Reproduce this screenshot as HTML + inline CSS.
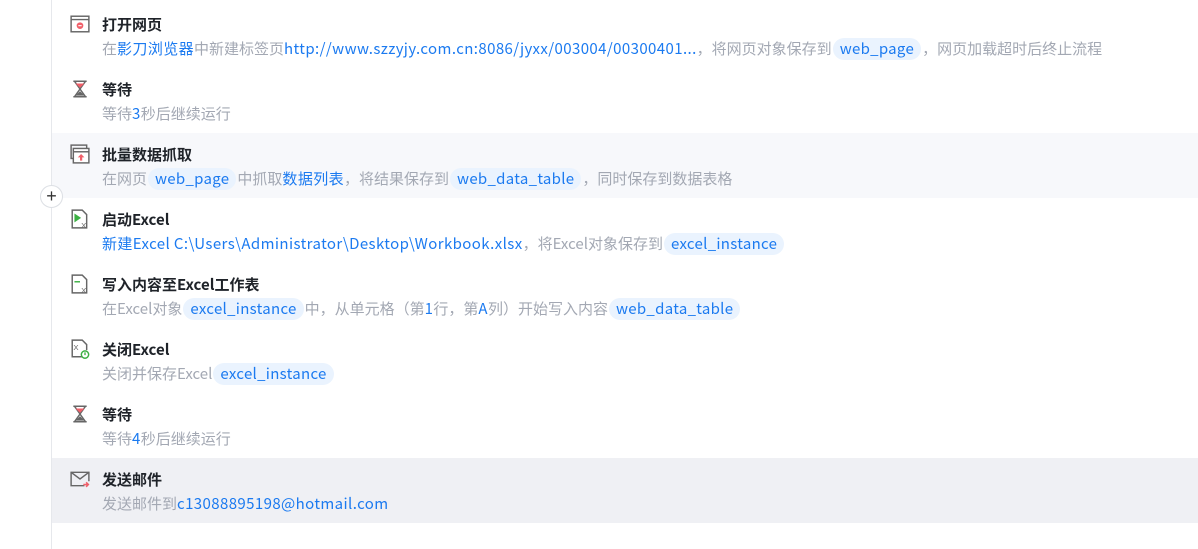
<!DOCTYPE html>
<html><head><meta charset="utf-8"><style>
*{margin:0;padding:0;box-sizing:border-box}
body{width:1198px;height:549px;background:#fff;position:relative;overflow:hidden;font-family:"Noto Sans CJK SC","Liberation Sans",sans-serif}
.line{position:absolute;left:51px;top:0;width:1px;height:549px;background:#e6e8ec}
.row{position:absolute;left:52px;width:1146px;height:65px}
.ic{position:absolute;left:18px;top:11px;width:20px;height:20px}
.t{position:absolute;left:50px;top:11px;font-size:15px;font-weight:bold;color:#1f2329;line-height:22px;white-space:nowrap}
.s{position:absolute;left:50px;top:35px;font-size:15px;color:#a3a8b3;line-height:22px;white-space:nowrap}
.b{color:#1b7af0;letter-spacing:0.4px}
.p{display:inline-block;background:#eaf3fe;color:#1b7af0;border-radius:11px;padding:0 7px;line-height:22px;font-size:15px;margin:0 1px;letter-spacing:0.3px}
.plus{position:absolute;left:40px;top:185px;width:23px;height:23px;border:1px solid #dcdfe4;border-radius:50%;background:#fff;text-align:center;line-height:20px;font-size:18px;color:#333;font-family:"Liberation Sans",sans-serif}
</style></head><body>
<div class="line"></div>

<div class="row" style="top:3px">
<svg class="ic" viewBox="0 0 18 18"><rect x="1" y="2" width="16" height="14" fill="none" stroke="#666" stroke-width="1.3"/><line x1="1" y1="5" x2="17" y2="5" stroke="#666" stroke-width="1.3"/><circle cx="9" cy="10.5" r="3" fill="#f0606a"/><rect x="7.5" y="10" width="3" height="1" fill="#fff"/></svg>
<div class="t">打开网页</div>
<div class="s">在<span class="b">影刀浏览器</span>中新建标签页<span class="b">http://www.szzyjy.com.cn:8086/jyxx/003004/00300401...</span>，将网页对象保存到<span class="p">web_page</span>，网页加载超时后终止流程</div>
</div>

<div class="row" style="top:68px">
<svg class="ic" viewBox="0 0 18 18"><path d="M3 2h12M3 16h12M4 2l5 7-5 7M14 2l-5 7 5 7" fill="none" stroke="#666" stroke-width="1.3"/><path d="M5 4h8l-4 4z" fill="#f0606a"/><path d="M5 15l4-4 4 4z" fill="#666"/></svg>
<div class="t">等待</div>
<div class="s">等待<span class="b">3</span>秒后继续运行</div>
</div>

<div class="row" style="top:133px;background:#f7f8fb">
<svg class="ic" viewBox="0 0 18 18"><rect x="1" y="1" width="14" height="12" fill="none" stroke="#666" stroke-width="1.3"/><rect x="3" y="4" width="14" height="13" fill="#fff" stroke="#666" stroke-width="1.3"/><line x1="3" y1="7" x2="17" y2="7" stroke="#666" stroke-width="1.3"/><path d="M10 9l3 3h-2v3h-2v-3h-2z" fill="#f0606a"/></svg>
<div class="t">批量数据抓取</div>
<div class="s">在网页<span class="p">web_page</span>中抓取<span class="b">数据列表</span>，将结果保存到<span class="p">web_data_table</span>，同时保存到数据表格</div>
</div>

<div class="plus">+</div>

<div class="row" style="top:198px">
<svg class="ic" viewBox="0 0 18 18"><path d="M2 1h9l4 4v12H2z" fill="none" stroke="#666" stroke-width="1.3"/><path d="M4 4l6 4-6 4z" fill="#3cb043"/><text x="10" y="17" font-size="7" fill="#666" font-family="Liberation Sans">X</text></svg>
<div class="t">启动Excel</div>
<div class="s"><span class="b">新建Excel C:\Users\Administrator\Desktop\Workbook.xlsx</span>，将Excel对象保存到<span class="p">excel_instance</span></div>
</div>

<div class="row" style="top:263px">
<svg class="ic" viewBox="0 0 18 18"><path d="M2 1h9l4 4v12H2z" fill="none" stroke="#666" stroke-width="1.3"/><path d="M4 7h5" stroke="#3cb043" stroke-width="1.3"/><text x="10" y="17" font-size="7" fill="#666" font-family="Liberation Sans">X</text></svg>
<div class="t">写入内容至Excel工作表</div>
<div class="s">在Excel对象<span class="p">excel_instance</span>中，从单元格（第<span class="b">1</span>行，第<span class="b">A</span>列）开始写入内容<span class="p">web_data_table</span></div>
</div>

<div class="row" style="top:328px">
<svg class="ic" viewBox="0 0 18 18"><path d="M11 16H2V1h9l4 4v5" fill="none" stroke="#666" stroke-width="1.3"/><text x="3" y="10" font-size="7" fill="#666" font-family="Liberation Sans">X</text><circle cx="13.5" cy="14" r="3.3" fill="#fff" stroke="#3cb043" stroke-width="1.3"/><line x1="13.5" y1="12" x2="13.5" y2="14.5" stroke="#3cb043" stroke-width="1.2"/></svg>
<div class="t">关闭Excel</div>
<div class="s">关闭并保存Excel<span class="p">excel_instance</span></div>
</div>

<div class="row" style="top:393px">
<svg class="ic" viewBox="0 0 18 18"><path d="M3 2h12M3 16h12M4 2l5 7-5 7M14 2l-5 7 5 7" fill="none" stroke="#666" stroke-width="1.3"/><path d="M5 4h8l-4 4z" fill="#f0606a"/><path d="M5 15l4-4 4 4z" fill="#666"/></svg>
<div class="t">等待</div>
<div class="s">等待<span class="b">4</span>秒后继续运行</div>
</div>

<div class="row" style="top:458px;background:#eff0f4">
<svg class="ic" viewBox="0 0 18 18"><path d="M13 15H1V3h16v8" fill="none" stroke="#666" stroke-width="1.3"/><path d="M1 3l8 6 8-6" fill="none" stroke="#666" stroke-width="1.3"/><path d="M12 14h4M14.5 12l2 2-2 2" fill="none" stroke="#f0606a" stroke-width="1.4"/></svg>
<div class="t">发送邮件</div>
<div class="s">发送邮件到<span class="b">c13088895198@hotmail.com</span></div>
</div>
</body></html>
